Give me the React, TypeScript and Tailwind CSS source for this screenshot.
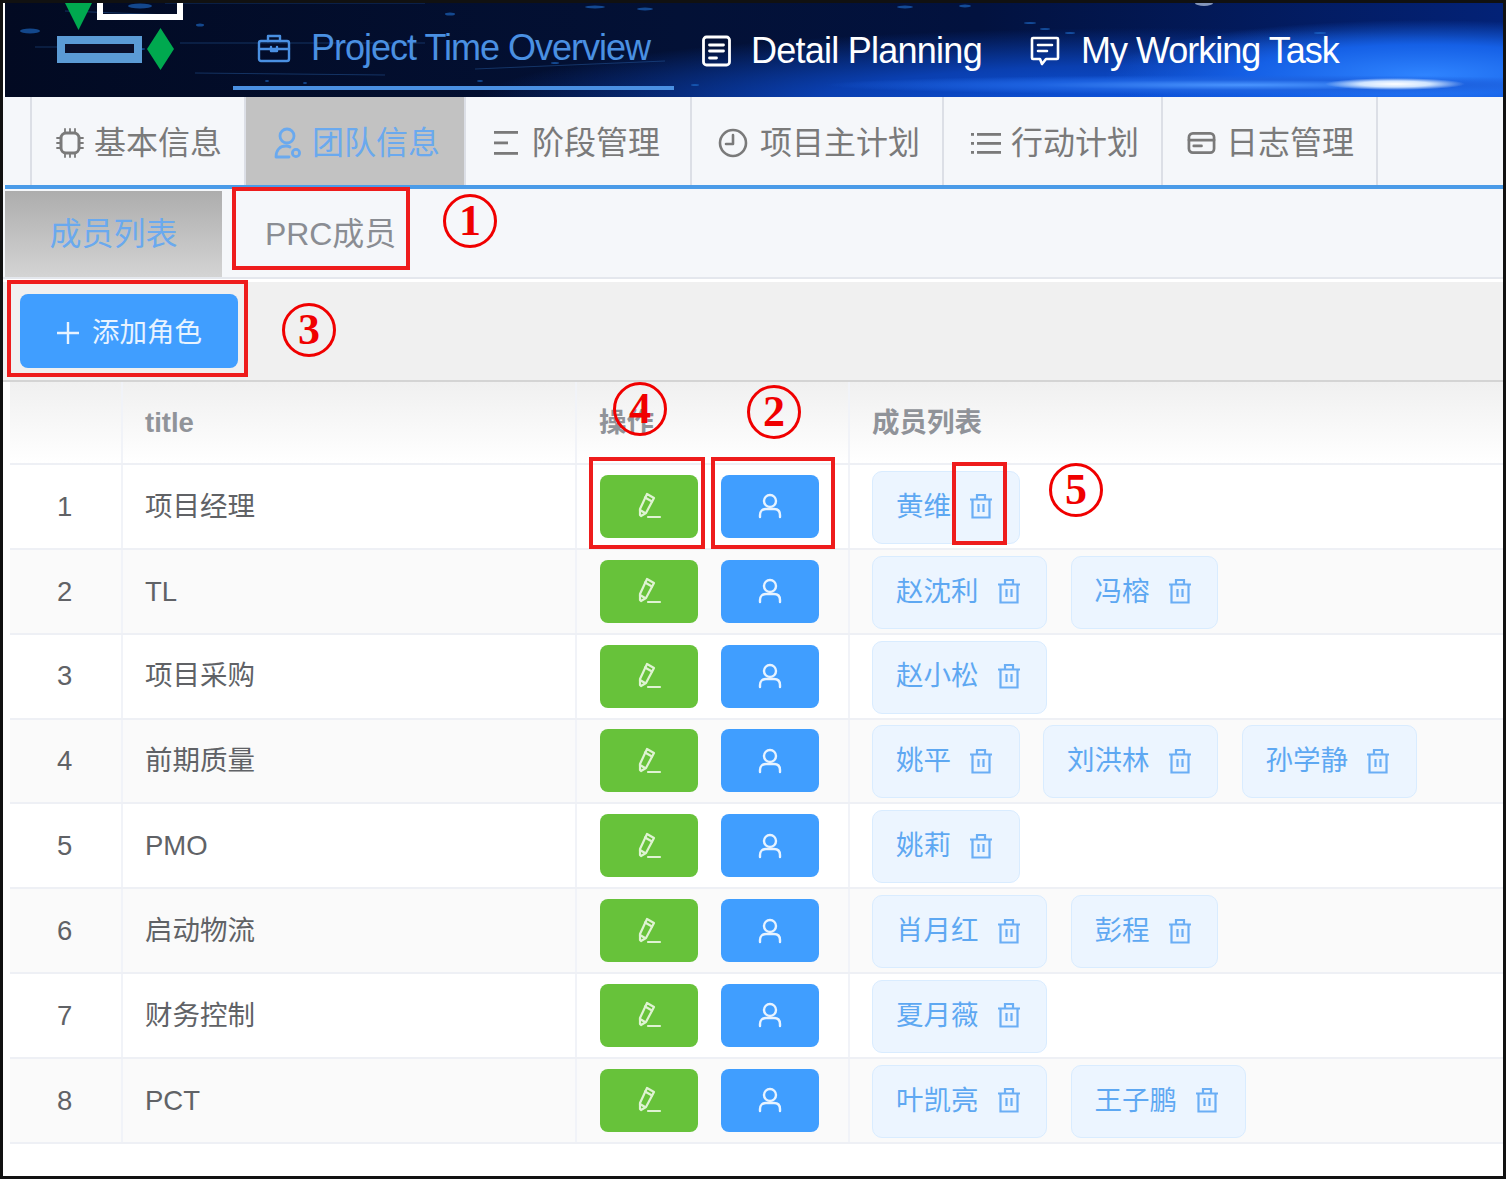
import type { ReactNode } from 'react';

type IconProps = { className?: string };

const stroke = {
  fill: 'none',
  stroke: 'currentColor',
  strokeLinecap: 'round' as const,
  strokeLinejoin: 'round' as const,
};

function CaseIcon({ className }: IconProps) {
  return (
    <svg viewBox="0 0 34 30" className={className} {...stroke} strokeWidth={2.4}>
      <rect x="2" y="8" width="30" height="20" rx="2" />
      <path d="M11 8V3h12v5M2 16h30M14 14v4h6v-4" />
    </svg>
  );
}

function DocIcon({ className }: IconProps) {
  return (
    <svg viewBox="0 0 30 32" className={className} {...stroke} strokeWidth={2.8}>
      <rect x="2" y="2" width="26" height="28" rx="3" />
      <path d="M8 10h14M8 16h14M8 23h7" />
    </svg>
  );
}

function ChatIcon({ className }: IconProps) {
  return (
    <svg viewBox="0 0 30 30" className={className} {...stroke} strokeWidth={2.6}>
      <path d="M3 2h24a1 1 0 0 1 1 1v19a1 1 0 0 1-1 1H16l-4 5-2-5H3a1 1 0 0 1-1-1V3a1 1 0 0 1 1-1z" />
      <path d="M8 9h14M8 15h9" />
    </svg>
  );
}

function ChipIcon({ className }: IconProps) {
  return (
    <svg viewBox="0 0 28 30" className={className} {...stroke} strokeWidth={2.4}>
      <rect x="5" y="5" width="18" height="20" rx="5" strokeWidth={3} />
      <path d="M9 1v3M14 1v3M19 1v3M9 26v3M14 26v3M19 26v3M1 10h3M1 15h3M1 20h3M24 10h3M24 15h3M24 20h3" strokeWidth={1.8} />
    </svg>
  );
}

function TeamIcon({ className }: IconProps) {
  return (
    <svg viewBox="0 0 28 32" className={className} {...stroke} strokeWidth={2.8}>
      <circle cx="13" cy="9" r="7" />
      <path d="M2 30c0-7 4-11 10-11 2 0 3 .3 4 1M2 30h13" />
      <circle cx="22" cy="26" r="3.6" />
    </svg>
  );
}

function StepsIcon({ className }: IconProps) {
  return (
    <svg viewBox="0 0 26 28" className={className} fill="currentColor">
      <rect x="1" y="2" width="24" height="2.8" />
      <rect x="1" y="12.500" width="14" height="2.8" />
      <rect x="1" y="23" width="24" height="2.8" />
    </svg>
  );
}

function ClockIcon({ className }: IconProps) {
  return (
    <svg viewBox="0 0 30 30" className={className} {...stroke} strokeWidth={2.6}>
      <circle cx="15" cy="15" r="13" />
      <path d="M15 7v9H8" />
    </svg>
  );
}

function ListIcon({ className }: IconProps) {
  return (
    <svg viewBox="0 0 30 24" className={className} fill="currentColor">
      <rect x="0" y="2" width="3" height="2.8" />
      <rect x="6" y="2" width="24" height="2.8" />
      <rect x="0" y="11" width="3" height="2.8" />
      <rect x="6" y="11" width="24" height="2.8" />
      <rect x="0" y="20" width="3" height="2.8" />
      <rect x="6" y="20" width="24" height="2.8" />
    </svg>
  );
}

function CardIcon({ className }: IconProps) {
  return (
    <svg viewBox="0 0 30 26" className={className} {...stroke} strokeWidth={2.8}>
      <rect x="2" y="3" width="26" height="20" rx="4" />
      <path d="M2 10h26M7 16h8" />
    </svg>
  );
}

function PlusIcon({ className }: IconProps) {
  return (
    <svg viewBox="0 0 24 24" className={className} {...stroke} strokeWidth={2.4}>
      <path d="M12 1v22M1 12h22" strokeLinecap="butt" />
    </svg>
  );
}

function EditIcon({ className }: IconProps) {
  return (
    <svg viewBox="0 0 26 28" className={className} {...stroke} strokeWidth={2.2}>
      <path d="M11 2l7 4-8 15-5 3-1-1 0-6z" />
      <path d="M9 5.500l7 4M4 18l5 3M12 25h12" />
    </svg>
  );
}

function UserIcon({ className }: IconProps) {
  return (
    <svg viewBox="0 0 24 26" className={className} {...stroke} strokeWidth={2.4}>
      <circle cx="12" cy="8" r="6" />
      <path d="M2 24v-2c0-4 2.500-6 6-6h8c3.500 0 6 2 6 6v2" />
    </svg>
  );
}

function TrashIcon({ className }: IconProps) {
  return (
    <svg viewBox="0 0 24 26" className={className} {...stroke} strokeWidth={2.2}>
      <path d="M1 6.500h22M8 6.500V2h8v4.500M3.500 6.500V24.500h17V6.500M9.500 11v8M14.500 11v8" strokeLinecap="butt" strokeLinejoin="miter" />
    </svg>
  );
}

function Logo() {
  return (
    <svg viewBox="0 0 130 68" className="h-[68px] w-[130px] shrink-0">
      <path d="M10 0h27L23.500 27z" fill="#00a94f" />
      <path d="M42 0v17h86V0h-6v11H48V0z" fill="#fff" />
      <rect x="2" y="33" width="85" height="27" fill="#5b9bd5" />
      <rect x="10" y="41" width="69" height="9" fill="#0a0f2a" />
      <path d="M105.500 25l13.500 21-13.500 21-13.500-21z" fill="#00a94f" />
    </svg>
  );
}

// star streaks behind the banner menu
function BannerStars() {
  const dots = [
    [25, 28, 10, 2.5], [135, 3, 12, 2.500], [136, 46, 4, 1], [195, 22, 4, 1.5], [445, 11, 5, 1.5], [475, 78, 3, 1],
    [262, 78, 2, 1], [300, 80, 2, 1], [550, 60, 4, 1], [590, 4, 10, 1.5], [640, 6, 8, 1.5], [690, 82, 4, 1],
    [1025, 20, 6, 1], [1040, 26, 5, 1], [1065, 30, 5, 1], [1315, 30, 6, 1], [1320, 38, 3, 1], [1199, 0, 9, 3],
    [900, 4, 8, 1.5], [960, 3, 6, 1.5],
  ];
  return (
    <svg viewBox="0 0 1498 94" className="pointer-events-none absolute inset-0 h-full w-full">
      {dots.map(([cx, cy, rx, ry]) => (
        <ellipse key={`${cx}-${cy}`} cx={cx} cy={cy} rx={rx} ry={ry} fill={cx === 1199 ? '#dbe9ff' : '#1f6fd0'} opacity={0.6} />
      ))}
      <path d="M60 8L165 12M175 40H420M30 44H130M190 70L380 72M160 0H420M470 66L660 58" stroke="#2a62a8" strokeWidth="1" opacity="0.45" fill="none" />
    </svg>
  );
}

const projectTabs: { label: string; icon: ReactNode; classes: string; active?: boolean }[] = [
  { label: '基本信息', icon: <ChipIcon className="h-[30px] w-[28px]" />, classes: 'w-[216px] gap-[10px] pl-[24px]' },
  { label: '团队信息', icon: <TeamIcon className="h-[32px] w-[28px]" />, classes: 'w-[220px] gap-[10px] pl-[28px]', active: true },
  { label: '阶段管理', icon: <StepsIcon className="h-[28px] w-[26px]" />, classes: 'w-[226px] gap-[13px] pl-[27px]' },
  { label: '项目主计划', icon: <ClockIcon className="h-[30px] w-[30px]" />, classes: 'w-[252px] gap-[12px] pl-[26px]' },
  { label: '行动计划', icon: <ListIcon className="h-[24px] w-[30px]" />, classes: 'w-[219px] gap-[10px] pl-[27px]' },
  { label: '日志管理', icon: <CardIcon className="h-[26px] w-[29px]" />, classes: 'w-[215px] gap-[10px] pl-[24px]' },
];

const roles = [
  { title: '项目经理', members: ['黄维'] },
  { title: 'TL', members: ['赵沈利', '冯榕'] },
  { title: '项目采购', members: ['赵小松'] },
  { title: '前期质量', members: ['姚平', '刘洪林', '孙学静'] },
  { title: 'PMO', members: ['姚莉'] },
  { title: '启动物流', members: ['肖月红', '彭程'] },
  { title: '财务控制', members: ['夏月薇'] },
  { title: 'PCT', members: ['叶凯亮', '王子鹏'] },
];

const marks = [
  'left-[232px] top-[187px] h-[83px] w-[178px]',
  'left-[7px] top-[280px] h-[97px] w-[241px]',
  'left-[589px] top-[457px] h-[92px] w-[116px]',
  'left-[711px] top-[457px] h-[92px] w-[124px]',
  'left-[952px] top-[462px] h-[83px] w-[55px]',
];

const badges = [
  { text: '1', pos: 'left-[443px] top-[194px]' },
  { text: '3', pos: 'left-[282px] top-[303px]' },
  { text: '4', pos: 'left-[613px] top-[382px]' },
  { text: '2', pos: 'left-[747px] top-[385px]' },
  { text: '5', pos: 'left-[1049px] top-[463px]' },
];

function MemberTag({ name }: { name: string }) {
  return (
    <div className="mt-[2px] flex h-[73px] items-center gap-[18px] rounded-[10px] border border-[#d9ecff] bg-[#ecf5ff] pb-[2px] pl-[23px] pr-[25.5px] text-[27.5px] text-[#5ea8f2]">
      <span>{name}</span>
      <TrashIcon className="h-[26px] w-[24px] text-[#6aaef5]" />
    </div>
  );
}

export default function App() {
  return (
    <div className="relative h-[1180px] w-[1507px] overflow-hidden bg-white font-['Liberation_Sans','Noto_Sans_CJK_SC',sans-serif]">
      <div className="flex h-[1179px] w-[1506px] flex-col border-[3px] border-[#111] bg-white">
        {/* top banner */}
        <header className="relative ml-[2px] flex h-[94px] shrink-0 items-start bg-[#03103a] bg-[radial-gradient(ellipse_70px_6px_at_1390px_81px,#ffffff_0%,#cfe4ff_50%,transparent_100%),radial-gradient(ellipse_420px_10px_at_1240px_82px,#4a95ff_0%,#1d62e0_50%,transparent_100%),radial-gradient(ellipse_320px_55px_at_1420px_72px,#2f84ff_0%,#1560e6_55%,transparent_100%),radial-gradient(ellipse_680px_75px_at_1150px_100px,#0d55e0_0%,#0a3fb0_50%,transparent_100%),linear-gradient(90deg,#020a22_0%,#031136_45%,#02123f_65%,#032277_100%)]">
          <BannerStars />
          <div className="relative ml-[50px]">
            <Logo />
          </div>
          <nav className="relative ml-[48px] flex items-start">
            <div className="flex h-[87px] w-[441px] items-center gap-[20px] border-b-[4px] border-[#4a90e2] pt-[6px] pl-[24px] text-[#4a90e2]">
              <CaseIcon className="h-[30px] w-[34px]" />
              <span className="text-[36px] tracking-[-1px]">Project Time Overview</span>
            </div>
            <div className="ml-[27px] flex h-[94px] items-center gap-[19px] pt-[2px] text-white">
              <DocIcon className="h-[32px] w-[31px]" />
              <span className="text-[36px] tracking-[-0.75px]">Detail Planning</span>
            </div>
            <div className="ml-[48px] flex h-[94px] items-center gap-[21px] pt-[2px] text-white">
              <ChatIcon className="h-[30px] w-[30px]" />
              <span className="text-[36px] tracking-[-1px]">My Working Task</span>
            </div>
          </nav>
        </header>

        {/* project tabs */}
        <div className="flex h-[88px] shrink-0 bg-[#f5f7fa] pl-[27px]">
          {projectTabs.map((tab) => (
            <div
              key={tab.label}
              className={`flex items-center border-r-2 border-[#dcdfe6] pt-[3px] text-[32px] ${tab.classes} ${
                tab.active ? 'border-r-0 bg-[#c2c2c2] text-[#6aa9ee]' : 'text-[#7a7a7a] first:border-l-2'
              }`}
            >
              {tab.icon}
              <span>{tab.label}</span>
            </div>
          ))}
        </div>
        <div className="ml-[2px] h-[4px] shrink-0 bg-[#4a9be8]" />

        {/* sub tabs */}
        <div className="flex h-[90px] shrink-0 border-b-2 border-[#e4e7ed] bg-[#f5f7fa] pl-[2px] pt-[2px]">
          <div className="flex w-[217px] items-center justify-center bg-gradient-to-b from-[#adadad] to-[#d4d4d4] text-[32px] text-[#6aa9ee]">
            成员列表
          </div>
          <div className="ml-[43px] flex items-center text-[32px] tracking-[-0.1px] text-[#8a8d93]">PRC成员</div>
        </div>

        {/* toolbar */}
        <div className="mt-[3px] flex h-[100px] shrink-0 items-start border-b-2 border-[#d4d4d4] bg-[#f0f0f0] pl-[17px] pt-[12px]">
          <button className="flex h-[74px] w-[218px] items-center justify-center gap-[12px] rounded-[8px] bg-[#409eff] pt-[3px] text-[27.5px] text-[#e8f3ff]">
            <PlusIcon className="h-[24px] w-[24px]" />
            <span>添加角色</span>
          </button>
        </div>

        {/* role table */}
        <div className="ml-[7px] flex h-[83px] shrink-0 border-b-2 border-[#eef0f5] bg-gradient-to-b from-[#f0f0f0] to-white text-[27.5px] font-bold text-[#909399]">
          <div className="w-[113px] border-r-2 border-[#f1f3f8]" />
          <div className="flex w-[454px] items-center border-r-2 border-[#f1f3f8] pl-[22px]">title</div>
          <div className="flex w-[273px] items-center border-r-2 border-[#f1f3f8] pl-[22px]">操作</div>
          <div className="flex flex-1 items-center pl-[22px]">成员列表</div>
        </div>
        {roles.map((role, index) => (
          <div
            key={role.title}
            className={`ml-[7px] flex h-[84.85px] shrink-0 border-b-2 border-[#eef0f5] text-[27.5px] text-[#606266] ${
              index % 2 === 1 ? 'bg-[#fafafa]' : 'bg-white'
            }`}
          >
            <div className="flex w-[113px] items-center border-r-2 border-[#f1f3f8] pl-[47px]">{index + 1}</div>
            <div className="flex w-[454px] items-center border-r-2 border-[#f1f3f8] pl-[22px]">{role.title}</div>
            <div className="flex w-[273px] items-center gap-[23px] border-r-2 border-[#f1f3f8] pl-[23px]">
              <button className="flex h-[63px] w-[98px] items-center justify-center rounded-[8px] bg-[#67c23a] text-[#dff3d2]">
                <EditIcon className="h-[28px] w-[26px]" />
              </button>
              <button className="flex h-[63px] w-[98px] items-center justify-center rounded-[8px] bg-[#409eff] text-[#e8f3ff]">
                <UserIcon className="h-[26px] w-[24px]" />
              </button>
            </div>
            <div className="flex flex-1 items-center gap-[23.5px] pl-[22px]">
              {role.members.map((name) => (
                <MemberTag key={name} name={name} />
              ))}
            </div>
          </div>
        ))}
      </div>

      {/* red annotations over the screenshot */}
      {marks.map((box) => (
        <div key={box} className={`absolute border-[4px] border-[#ee1c1c] ${box}`} />
      ))}
      {badges.map((badge) => (
        <span
          key={badge.text}
          className={`absolute flex h-[54px] w-[54px] items-center justify-center rounded-full border-[3px] border-[#f00000] text-[44px] font-bold text-[#f00000] font-['Liberation_Serif',serif] ${badge.pos}`}
        >
          {badge.text}
        </span>
      ))}
    </div>
  );
}
